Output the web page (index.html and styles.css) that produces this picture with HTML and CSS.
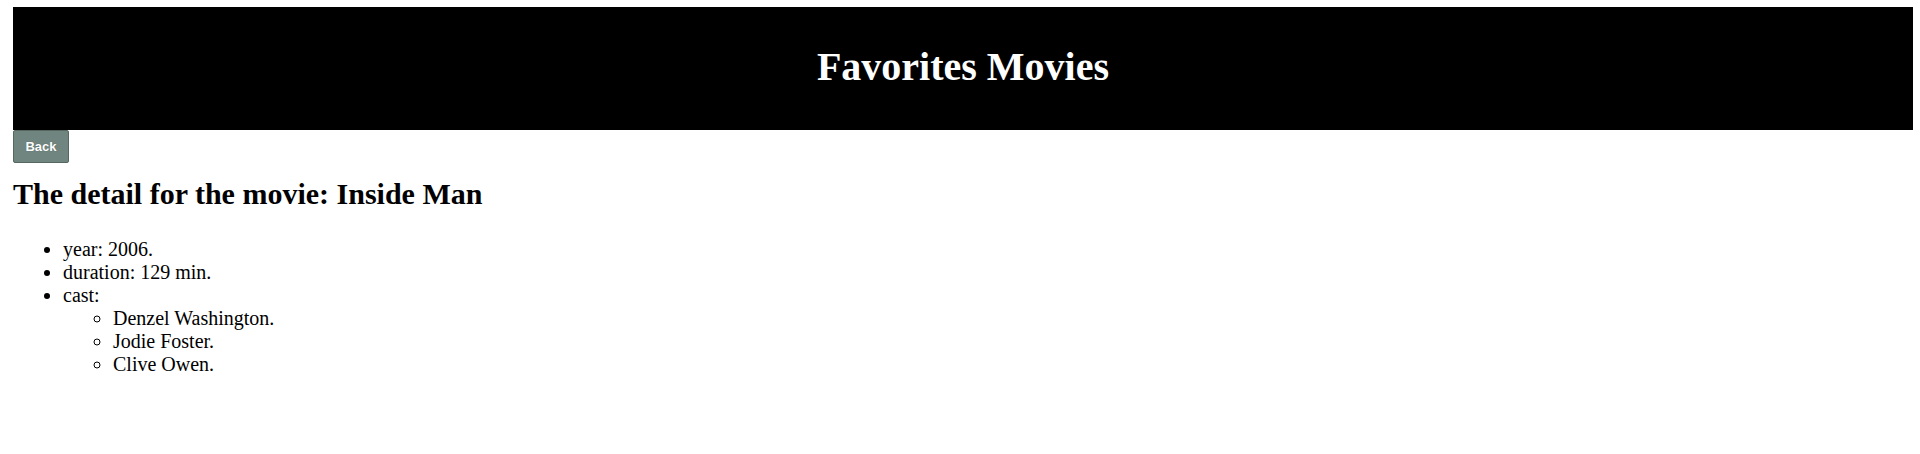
FILE: index.html
```html
<!DOCTYPE html>
<html>
<head>
<meta charset="utf-8">
<link rel="stylesheet" href="styles.css">
</head>
<body>
<header class="top">
  <h1 class="title">Favorites Movies</h1>
</header>
<div class="actions"><button class="back">Back</button></div>
<h2 class="detail">The detail for the movie: Inside Man</h2>
<ul class="facts">
  <li>year: 2006.</li>
  <li>duration: 129 min.</li>
  <li>cast:
    <ul class="cast">
      <li>Denzel Washington.</li>
      <li>Jodie Foster.</li>
      <li>Clive Owen.</li>
    </ul>
  </li>
</ul>
</body>
</html>
```
FILE: styles.css
```css
html, body { background: #fff; }
body {
  margin: 7px 7px 0 13px;
  font-family: "Liberation Serif", "Times New Roman", serif;
  font-size: 20px;
  line-height: 23px;
  color: #000;
}
.top {
  background: #000;
  padding: 37px 0 40px;
  text-align: center;
}
.title {
  margin: 0;
  color: #fff;
  font-size: 40px;
  line-height: 46px;
  font-weight: bold;
}
.actions { display: flex; }
.back {
  width: 56px;
  height: 33px;
  padding: 0;
  margin: 0;
  background: #70857f;
  border: 1px solid #56675f;
  border-radius: 2px;
  color: #fff;
  font-family: "Liberation Sans", Arial, sans-serif;
  font-weight: bold;
  font-size: 13px;
  text-shadow: 0 0 1px rgba(0,0,0,0.3);
}
.detail {
  margin: 14px 0 0;
  font-size: 30px;
  line-height: 34px;
  font-weight: bold;
}
.facts {
  margin: 27px 0 0;
  padding-left: 50px;
  list-style: disc;
}
.cast {
  margin: 0;
  padding-left: 50px;
  list-style: circle;
}
```
